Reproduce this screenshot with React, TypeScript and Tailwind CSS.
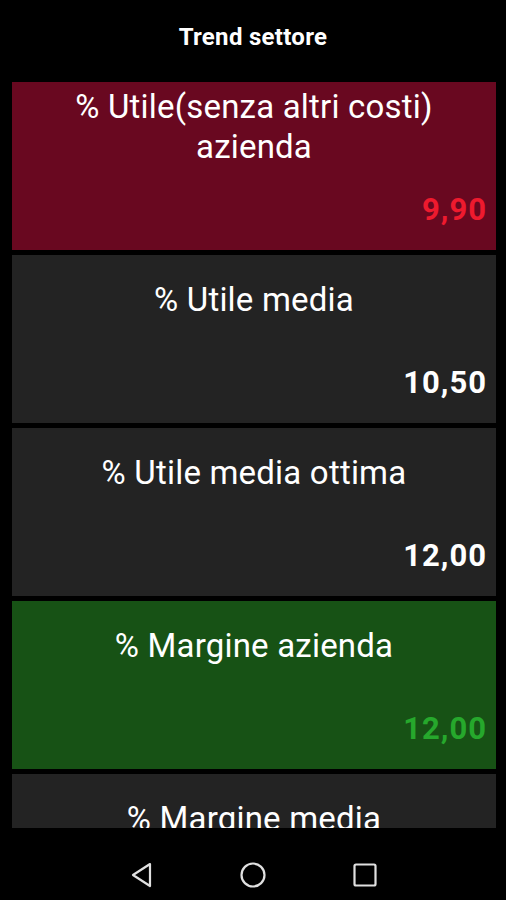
import React from "react";

type Row = {
  label: string;
  value: string;
  bg: string;
  valueColor: string;
};

const rows: Row[] = [
  { label: "% Utile(senza altri costi) azienda", value: "9,90", bg: "bg-[#690820]", valueColor: "text-[#ee1a2e]" },
  { label: "% Utile media", value: "10,50", bg: "bg-[#232323]", valueColor: "text-white" },
  { label: "% Utile media ottima", value: "12,00", bg: "bg-[#232323]", valueColor: "text-white" },
  { label: "% Margine azienda", value: "12,00", bg: "bg-[#175215]", valueColor: "text-[#26a82c]" },
  { label: "% Margine media", value: "12,00", bg: "bg-[#232323]", valueColor: "text-white" },
];

const App: React.FC = () => {
  return (
    <div className="w-[506px] h-[900px] bg-black flex flex-col overflow-hidden font-['Roboto',sans-serif]">
      {/* Header */}
      <div className="h-[82px] flex items-center justify-center pb-[8px]">
        <h1 className="text-white text-[24px] font-bold tracking-[0.3px]">Trend settore</h1>
      </div>

      {/* List */}
      <div className="flex-1 overflow-hidden px-[12px] pr-[10px] flex flex-col gap-[5px]">
        {rows.map((r, i) => (
          <div key={i} className={`${r.bg} h-[168px] shrink-0 flex flex-col`}>
            <div className="h-[90px] flex items-center justify-center px-[16px]">
              <p className="text-white text-[33px] leading-[40px] text-center tracking-[0.2px]">{r.label}</p>
            </div>
            <div className="flex justify-end pr-[9px] pt-[19px]">
              <span className={`${r.valueColor} text-[31px] font-bold leading-[38px] tracking-[1px]`}>{r.value}</span>
            </div>
          </div>
        ))}
      </div>

      {/* Nav bar */}
      <div className="h-[72px] shrink-0 flex items-start justify-between px-[128px] pt-[34px]">
        <svg width="26" height="26" viewBox="0 0 26 26" fill="none" stroke="#e0e0e0" strokeWidth="2.2" strokeLinejoin="round">
          <path d="M22 2 L5 13 L22 24 Z" />
        </svg>
        <svg width="26" height="26" viewBox="0 0 26 26" fill="none" stroke="#e0e0e0" strokeWidth="2.2">
          <circle cx="13" cy="13" r="11.5" />
        </svg>
        <svg width="26" height="26" viewBox="0 0 26 26" fill="none" stroke="#e0e0e0" strokeWidth="2.2" strokeLinejoin="round">
          <rect x="2.5" y="2.5" width="21" height="21" rx="1.5" />
        </svg>
      </div>
    </div>
  );
};

export default App;
